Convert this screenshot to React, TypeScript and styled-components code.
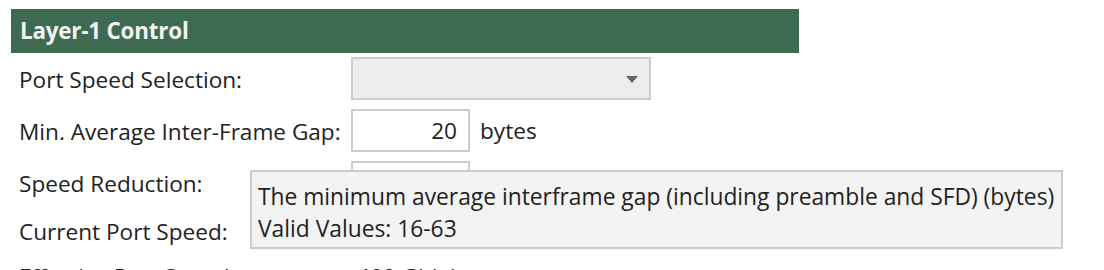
import styled, { createGlobalStyle } from 'styled-components';

const GlobalStyle = createGlobalStyle`
  body {
    margin: 0;
    background: #ffffff;
    font-family: 'Open Sans', 'Noto Sans', sans-serif;
    color: #222222;
  }
`;

interface Row {
  label: string;
  kind: 'select' | 'input' | 'text';
  value?: string;
  unit?: string;
}

const rows: Row[] = [
  { label: 'Port Speed Selection:', kind: 'select' },
  { label: 'Min. Average Inter-Frame Gap:', kind: 'input', value: '20', unit: 'bytes' },
  { label: 'Speed Reduction:', kind: 'input', value: '' },
  { label: 'Current Port Speed:', kind: 'text', value: '' },
  { label: 'Effective Port Speed:', kind: 'text', value: '400 Gbit/s' },
];

export default function App() {
  return (
    <>
      <GlobalStyle />
      <Panel>
        <Header>Layer-1 Control</Header>
        <Form>
          {rows.map((row) => (
            <FormRow key={row.label} $compact={row.kind === 'text'}>
              <Label>{row.label}</Label>
              <Field>
                {row.kind === 'select' && (
                  <Select>
                    <Arrow />
                  </Select>
                )}
                {row.kind === 'input' && <NumberBox>{row.value}</NumberBox>}
                {row.kind === 'text' && <Value>{row.value}</Value>}
                {row.unit && <Unit>{row.unit}</Unit>}
              </Field>
            </FormRow>
          ))}
        </Form>
        <Tooltip>
          <div>The minimum average interframe gap (including preamble and SFD) (bytes)</div>
          <div>Valid Values: 16-63</div>
        </Tooltip>
      </Panel>
    </>
  );
}

const Panel = styled.div`
  position: relative;
  padding: 9px 0 0 11px;
  height: 261px;
  overflow: hidden;
`;

const Header = styled.div`
  width: 788px;
  height: 44px;
  box-sizing: border-box;
  padding: 0 9px 1px;
  display: flex;
  align-items: center;
  background-color: #3f6a52;
  color: #f2f2f2;
  font-size: 22.4px;
  font-weight: 700;
  letter-spacing: -0.2px;
`;

const Form = styled.div`
  display: flex;
  flex-direction: column;
  gap: 9px;
  padding: 4px 0 0 8px;
`;

const FormRow = styled.div<{ $compact: boolean }>`
  display: grid;
  grid-template-columns: 332px 1fr;
  align-items: center;
  height: ${({ $compact }) => ($compact ? '36px' : '43px')};
  flex-shrink: 0;
`;

const Label = styled.div`
  font-size: 22.6px;
  color: #222222;
  padding-top: 1px;
`;

const Field = styled.div`
  display: flex;
  align-items: center;
  gap: 10px;
`;

const Select = styled.div`
  position: relative;
  width: 300px;
  height: 43px;
  box-sizing: border-box;
  border: 2px solid #cccccc;
  background-color: #ededed;
`;

const Arrow = styled.span`
  position: absolute;
  right: 11px;
  top: 17px;
  width: 0;
  height: 0;
  border-left: 6px solid transparent;
  border-right: 6px solid transparent;
  border-top: 7px solid #666666;
`;

const NumberBox = styled.div`
  width: 119px;
  height: 43px;
  box-sizing: border-box;
  border: 2px solid #cccccc;
  background-color: #ffffff;
  padding: 0 11px 0 0;
  display: flex;
  align-items: center;
  justify-content: flex-end;
  font-size: 22.6px;
  color: #222222;
`;

const Value = styled.div`
  padding-left: 6px;
  font-size: 22.6px;
  color: #222222;
`;

const Unit = styled.span`
  font-size: 22.6px;
  color: #222222;
`;

const Tooltip = styled.div`
  position: absolute;
  left: 250px;
  top: 170px;
  width: 813px;
  height: 79px;
  box-sizing: border-box;
  border: 2px solid #cccccc;
  background-color: #f3f3f3;
  padding: 9px 6px 0;
  font-size: 22.8px;
  line-height: 32px;
  color: #222222;
  white-space: nowrap;
`;
